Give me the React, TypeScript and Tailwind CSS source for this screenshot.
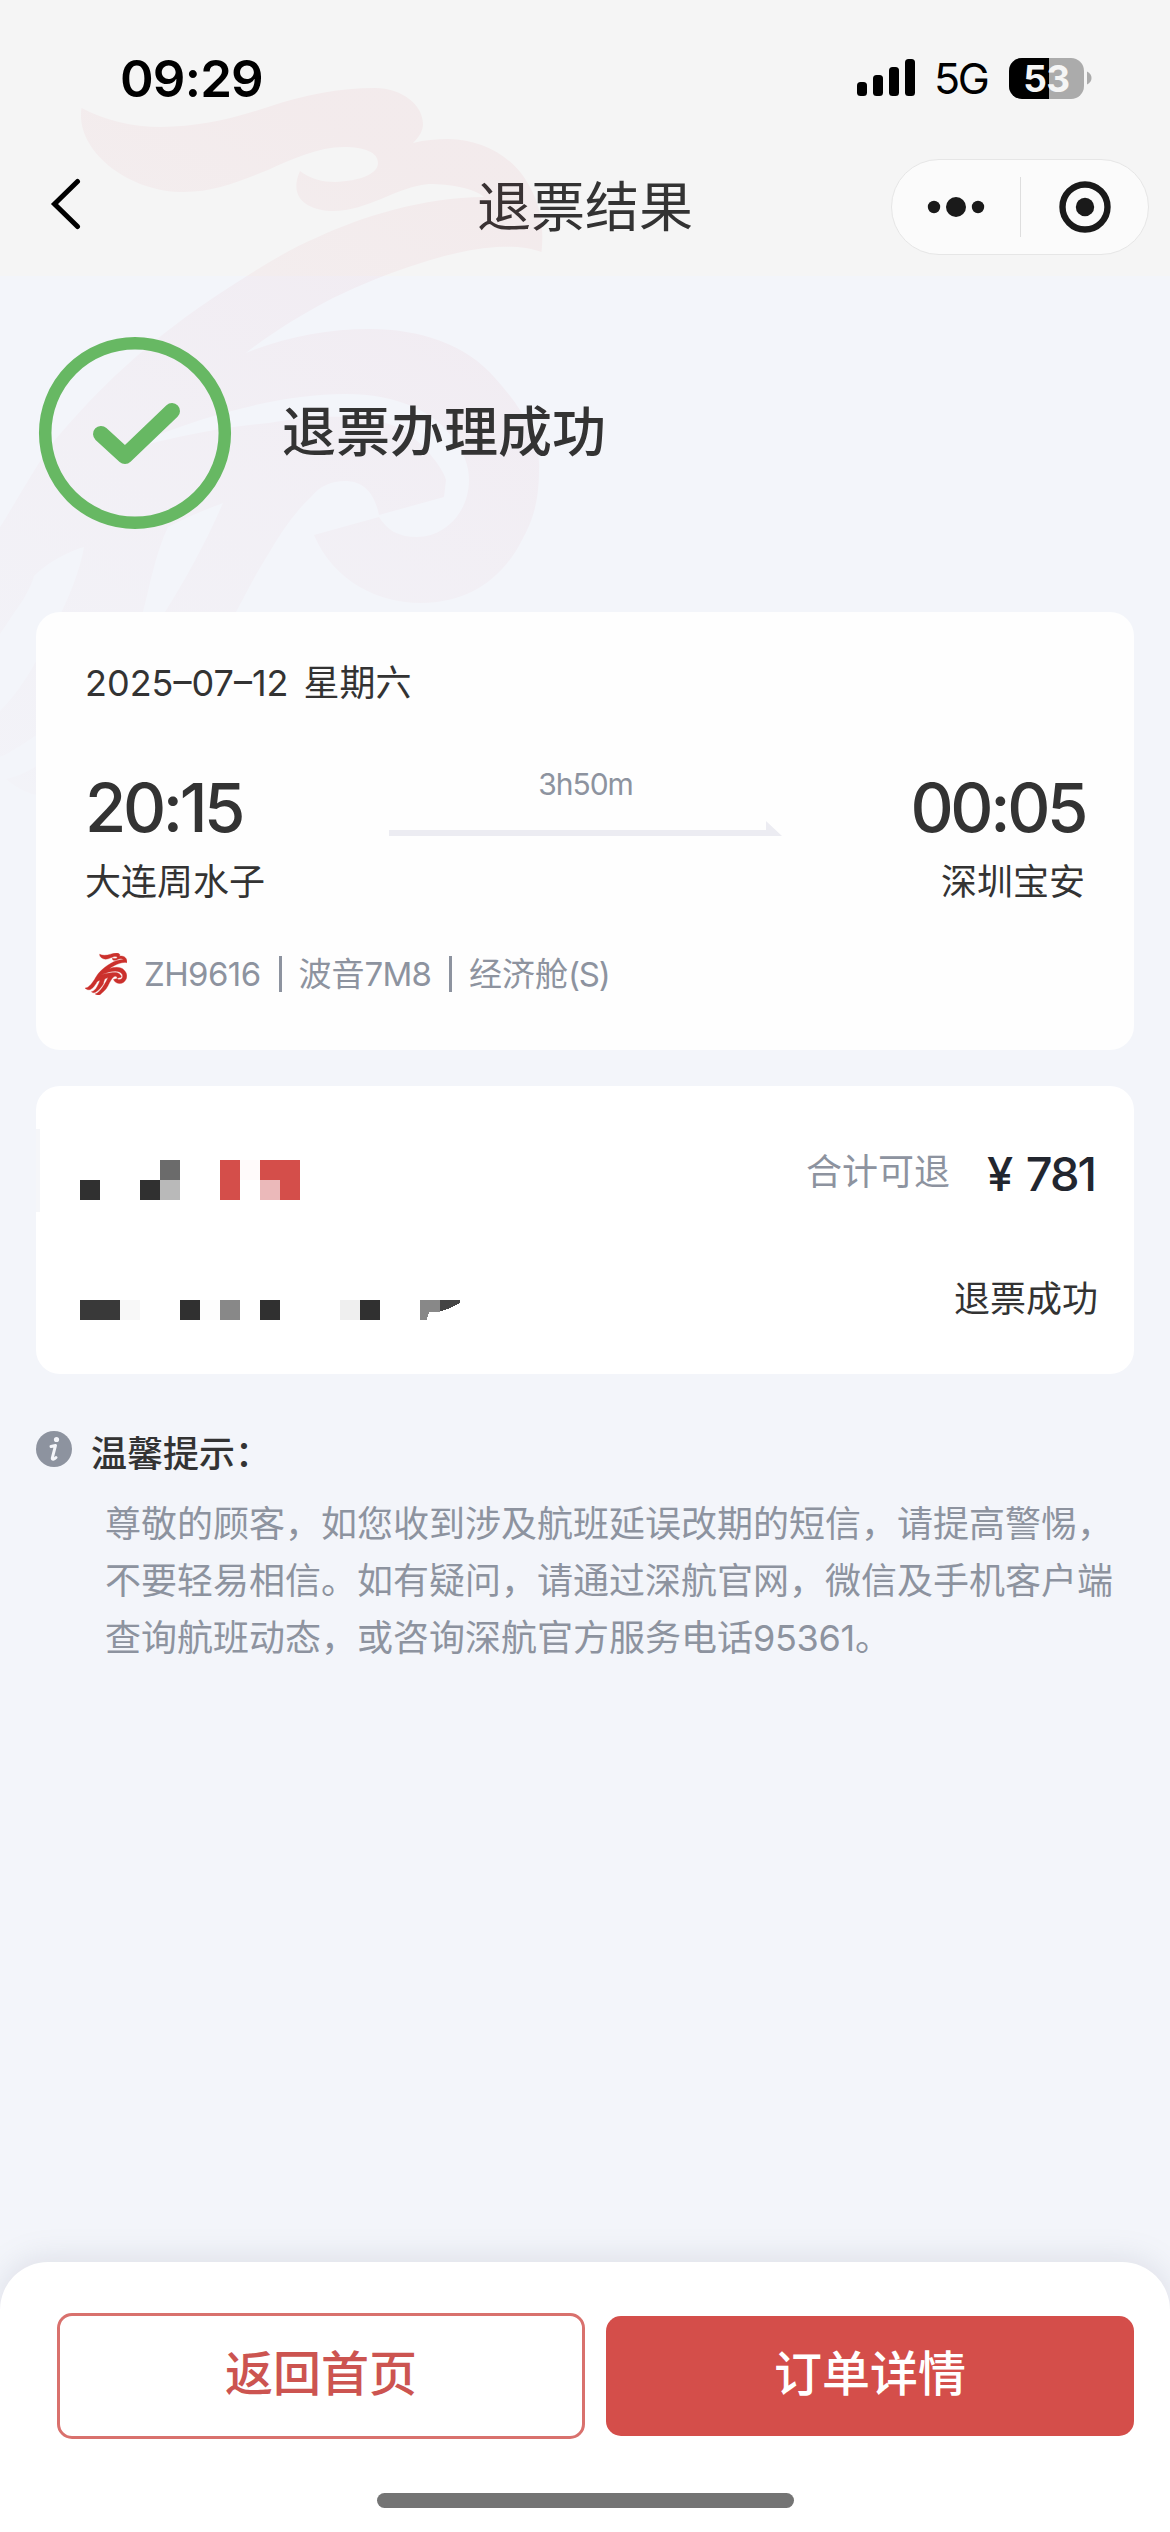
import React from "react";
import clsx from "clsx";

interface Block {
  x: number;
  y: number;
  w: number;
  h: number;
  fill: string;
}

// masked passenger name and ticket number
const MASK_BLOCKS: Block[] = [
  { x: 0, y: 20, w: 20, h: 20, fill: "#303030" },
  { x: 60, y: 20, w: 20, h: 20, fill: "#303030" },
  { x: 80, y: 0, w: 20, h: 20, fill: "#6b6b6b" },
  { x: 80, y: 20, w: 20, h: 20, fill: "#b9b9b9" },
  { x: 140, y: 0, w: 20, h: 40, fill: "#d44e4a" },
  { x: 160, y: 0, w: 20, h: 20, fill: "#fffafa" },
  { x: 180, y: 0, w: 40, h: 20, fill: "#d44e4a" },
  { x: 180, y: 20, w: 20, h: 20, fill: "#ebb9ba" },
  { x: 200, y: 20, w: 20, h: 20, fill: "#d44e4a" },
  { x: 0, y: 140, w: 40, h: 20, fill: "#393939" },
  { x: 40, y: 140, w: 20, h: 20, fill: "#f8f8f8" },
  { x: 100, y: 140, w: 20, h: 20, fill: "#303030" },
  { x: 120, y: 140, w: 20, h: 20, fill: "#fdfdfd" },
  { x: 140, y: 140, w: 20, h: 20, fill: "#888888" },
  { x: 180, y: 140, w: 20, h: 20, fill: "#303030" },
  { x: 260, y: 140, w: 20, h: 20, fill: "#efefef" },
  { x: 280, y: 140, w: 20, h: 20, fill: "#303030" },
];

const SIGNAL_BARS = [
  { x: 0, h: 14 },
  { x: 16, h: 21 },
  { x: 32, h: 29 },
  { x: 48, h: 37 },
];

const BIRD_PATH =
  "M81.5 108 C104 120 132 127 161 127 C198 127 232 119 268 107 C303 95 340 88 375 88 C402 88 423 105 423 124 C423 131 419 137 413 143 " +
  "C425 140 436 139 448 139 C485 140 515 158 530 187 C541 207 544 229 541.5 252 C529 247 514 246 497 247 C470 249 445 255 421 263 C389 273 362 284 333 298 " +
  "C300 315 270 334 246 353 C285 337 327 329 370 329 C419 329 466 344 495 378 C523 409 541 440 539 470 C539 503 532 522 522 540 " +
  "C502 580 467 603 421 603 C379 603 334 582 314 535 L379 517 C387 530 398 537 417 537 C445 537 469 512 469 480 C469 464 463 452 454 440 " +
  "C436 412 398 394 345 394 C274 394 186 420 105 457 C160 439 215 428 269 423 C319 413 389 413 412 437 C430 450 445 473 446 480 L444 497 L379 515 " +
  "C374 490 361 481 345 481 C331 481 320 486 311 497 C294 513 281 532 269 553 C255 575 247 592 236 612 C215 661 180 722 110 770 C96 791 78 797 59 797 C36 798 20 791 6 779 " +
  "C50 770 105 713 165 612 C187 577 206 542 223 503 C204 510 185 518 168 527 C155 555 150 585 143 612 C112 664 72 717 10 752 C-10 765 -40 758 -58 742 " +
  "C-20 738 15 704 42 650 C57 621 77 586 84 547 C67 552 48 562 34 576 C30 590 22 602 12 616 C-16 660 -39 685 -75 704 C-105 717 -145 704 -166 679 " +
  "C-120 684 -70 631 -8 540 C20 496 37 463 55 440 C98 389 145 344 210 300 C247 276 282 252 318 237 C361 217 424 197 484 197 C474 188 450 184 429 184 " +
  "C396 187 368 211 333 211 C311 211 287 200 300 171 C310 179 323 182 335 182 C360 181 378 174 378 163 C378 152 364 147 344 147 C318 147 292 159 268 170 " +
  "C238 182 214 192 184 192 C126 192 75 149 81.5 108 Z";

const Watermark = () => (
  <svg
    viewBox="-166 88 709 709"
    className="pointer-events-none absolute top-[88px] -left-[166px] size-[709px]"
  >
    <defs>
      <linearGradient id="birdFade" x1="0.8" y1="0.1" x2="0.3" y2="1">
        <stop offset="0" stopColor="#c81430" stopOpacity="0.045" />
        <stop offset="0.5" stopColor="#c81430" stopOpacity="0.024" />
        <stop offset="1" stopColor="#c81430" stopOpacity="0.01" />
      </linearGradient>
    </defs>
    <path d={BIRD_PATH} fill="url(#birdFade)" />
  </svg>
);

const StatusBar = () => (
  <div className="flex h-[156px] items-center pr-[78px] pl-[120px] text-black">
    <span className="text-[51px] leading-none font-semibold tracking-[-0.8px]">09:29</span>
    <svg viewBox="0 0 58 40" className="ml-auto h-10 w-[58px]">
      {SIGNAL_BARS.map((bar) => (
        <rect key={bar.x} x={bar.x} y={38 - bar.h} width="10" height={bar.h} rx="3.5" />
      ))}
    </svg>
    <span className="ml-[19px] w-[55px] text-[43px] leading-none font-normal tracking-[-2.5px]">
      5G
    </span>
    <div className="relative ml-5 flex h-[41px] w-[75px] items-center justify-center rounded-[13px] bg-[#ababab]">
      <div className="absolute inset-y-0 left-0 w-10 rounded-l-[13px] bg-black" />
      <span className="relative text-[37px] leading-[41px] font-bold tracking-[-0.5px] text-[#f5f5f5]">
        53
      </span>
    </div>
    <svg viewBox="0 0 5 14" className="ml-[3px] h-3.5 w-[5px]">
      <path d="M0 0.5 C6 3 6 11 0 13.5 Z" fill="#ababab" />
    </svg>
  </div>
);

const NavBar = () => (
  <div className="grid h-[120px] grid-cols-[1fr_auto_1fr] items-start">
    <svg viewBox="0 0 32 52" className="mt-[22px] ml-[50px] h-[52px] w-8">
      <path
        d="M27.5 3.5 L4.5 26 L27.5 48.5"
        fill="none"
        stroke="#000"
        strokeWidth="5"
        strokeLinecap="round"
        strokeLinejoin="miter"
      />
    </svg>
    <h1 className="mt-6 text-[54px] leading-[56px] font-normal text-[#333333]">退票结果</h1>
    <div className="mt-[3px] mr-[21px] flex h-24 w-[258px] items-center justify-self-end rounded-full border border-[#e6e6e6] bg-[#fbfbfb]">
      <svg viewBox="0 0 128 40" className="h-10 w-32" fill="#1a1a1a">
        <circle cx="42" cy="20" r="6.2" />
        <circle cx="64" cy="20" r="10" />
        <circle cx="86" cy="20" r="6.2" />
      </svg>
      <span className="h-15 w-px bg-[#dedede]" />
      <svg viewBox="0 0 127 60" className="h-15 w-[127px]">
        <circle cx="64" cy="30" r="22.5" fill="none" stroke="#1a1a1a" strokeWidth="6.4" />
        <circle cx="64" cy="30" r="9.2" fill="#1a1a1a" />
      </svg>
    </div>
  </div>
);

const ResultBanner = () => (
  <section className="flex h-[336px] items-start pt-[60px] pl-[38px]">
    <svg viewBox="0 0 194 194" className="size-[194px]" fill="none" stroke="#67b863">
      <circle cx="97" cy="97" r="89.8" strokeWidth="12.5" />
      <path d="M63 98 L87 120 L134 75" strokeWidth="16" strokeLinecap="round" strokeLinejoin="round" />
    </svg>
    <h2 className="mt-[67px] ml-[50px] text-[54px] leading-[60px] font-medium text-[#333333]">
      退票办理成功
    </h2>
  </section>
);

interface StopProps {
  time: string;
  airport: string;
  alignEnd?: boolean;
}

const Stop: React.FC<StopProps> = ({ time, airport, alignEnd }) => (
  <div className={clsx("flex flex-col", alignEnd ? "items-end" : "items-start")}>
    <span className="text-[67px] leading-[70px] font-medium tracking-[-3.4px] text-[#333333]">
      {time}
    </span>
    <span className="mt-[15px] text-[36px] leading-[48px] text-[#333333]">{airport}</span>
  </div>
);

const FlightCard = () => (
  <section className="mx-9 h-[438px] rounded-3xl bg-white/90 px-[49px] pt-[47px]">
    <p className="text-[36px] leading-[48px] text-[#333333]">
      <span>2025–07–12</span>
      <span className="ml-[15px]">星期六</span>
    </p>
    <div className="mt-[66px] grid grid-cols-[304px_393px_1fr] items-start">
      <Stop time="20:15" airport="大连周水子" />
      <div className="-mt-[7px] flex flex-col items-center">
        <span className="text-[30px] leading-[36px] tracking-[-1px] text-[#8d939f]">3h50m</span>
        <svg viewBox="0 0 393 15" className="mt-[19px] h-[15px] w-[393px]">
          <path d="M0 9 H377 V0 L393 15 H0 Z" fill="#ececf2" />
        </svg>
      </div>
      <Stop time="00:05" airport="深圳宝安" alignEnd />
    </div>
    <div className="mt-11 flex h-12 items-center text-[33px] leading-none text-[#8d939f]">
      <svg viewBox="-166 88 709 709" className="mr-[17px] size-[42px]">
        <path d={BIRD_PATH} fill="#cb302c" stroke="#cb302c" strokeWidth="6" />
      </svg>
      <span className="tracking-[-0.6px]">ZH9616</span>
      <span className="mr-[17px] ml-[18px] h-9 w-[3px] bg-[#8d939f]" />
      <span>
        波音<span className="tracking-[-0.8px]">7M8</span>
      </span>
      <span className="mr-[17px] ml-[18px] h-9 w-[3px] bg-[#8d939f]" />
      <span>
        经济舱<span className="tracking-[-1.2px]">(S)</span>
      </span>
    </div>
  </section>
);

const RefundCard = () => (
  <section className="relative mx-9 mt-9 flex h-[288px] justify-between rounded-3xl bg-white pr-9 pl-11">
    <span className="absolute top-[43px] left-0 h-[83px] w-1 bg-[#f5f6f9]" />
    <svg viewBox="0 0 380 160" className="mt-[74px] h-[160px] w-[380px]" shapeRendering="crispEdges">
      {MASK_BLOCKS.map((b) => (
        <rect key={`${b.x}-${b.y}`} x={b.x} y={b.y} width={b.w} height={b.h} fill={b.fill} />
      ))}
      <path d="M340 140 H360 V151.5 C356 152.5 352 152 349 152 L346.5 160 H340 Z" fill="#888888" />
      <path d="M360 140 H380 V143 C373 147 367 150 360 151.5 Z" fill="#444444" />
    </svg>
    <div className="flex flex-col items-end">
      <p className="mt-[57px] flex h-[60px] items-center">
        <span className="-mt-0.5 text-[36px] leading-none text-[#8d939f]">合计可退</span>
        <span className="mr-[3px] ml-[37px] text-[47px] leading-none font-medium tracking-[-2px] text-[#22262f] [word-spacing:4px]">
          ¥ 781
        </span>
      </p>
      <p className="mt-[72px] text-[36px] leading-[48px] text-[#333333]">退票成功</p>
    </div>
  </section>
);

const Tips = () => (
  <section className="px-9 pt-[54px]">
    <div className="flex items-start">
      <svg viewBox="0 0 36 36" className="mt-[3px] size-9">
        <circle cx="18" cy="18" r="18" fill="#8d939f" />
        <circle cx="20.5" cy="8.5" r="2.6" fill="#f4f5fa" />
        <path
          d="M15 15.5 L19.5 14.5 L16.3 27 C16 29 18 28.5 20 26.5"
          fill="none"
          stroke="#f4f5fa"
          strokeWidth="3"
          strokeLinejoin="round"
          strokeLinecap="round"
        />
      </svg>
      <h3 className="ml-[19px] text-[36px] leading-[52px] font-medium text-[#333333]">
        温馨提示：
      </h3>
    </div>
    <p className="mt-4 ml-[69px] w-[1020px] text-[36px] leading-[57px] text-[#8d939f]">
      尊敬的顾客，如您收到涉及航班延误改期的短信，请提高警惕，
      <br />
      不要轻易相信。如有疑问，请通过深航官网，微信及手机客户端
      <br />
      查询航班动态，或咨询深航官方服务电话<span className="tracking-[-0.3px]">95361</span>。
    </p>
  </section>
);

const BottomBar = () => (
  <footer className="mt-auto flex h-[270px] flex-col items-center rounded-t-[48px] bg-white shadow-[0_-4px_30px_rgba(120,125,150,0.18)]">
    <div className="mt-[51px] grid w-full grid-cols-2 items-center gap-[21px] pr-9 pl-[57px] text-[48px] leading-none font-medium">
      <button className="h-[126px] rounded-[15px] border-3 border-[#d9716d] bg-white pb-1 text-[#cc5450]">
        返回首页
      </button>
      <button className="h-[120px] rounded-[15px] bg-[#d44e4a] pb-1 text-white">订单详情</button>
    </div>
    <div className="mt-auto mb-6 h-[15px] w-[417px] rounded-full bg-[#747474]" />
  </footer>
);

export default function App() {
  return (
    <div
      lang="zh-CN"
      className="relative flex h-[2532px] w-[1170px] flex-col overflow-hidden bg-[#f3f5fa] font-['Inter','Noto_Sans_CJK_SC',sans-serif]"
    >
      <header className="h-[276px] bg-[#f5f5f5]">
        <StatusBar />
        <NavBar />
      </header>
      <Watermark />
      <main className="relative">
        <ResultBanner />
        <FlightCard />
        <RefundCard />
        <Tips />
      </main>
      <BottomBar />
    </div>
  );
}
